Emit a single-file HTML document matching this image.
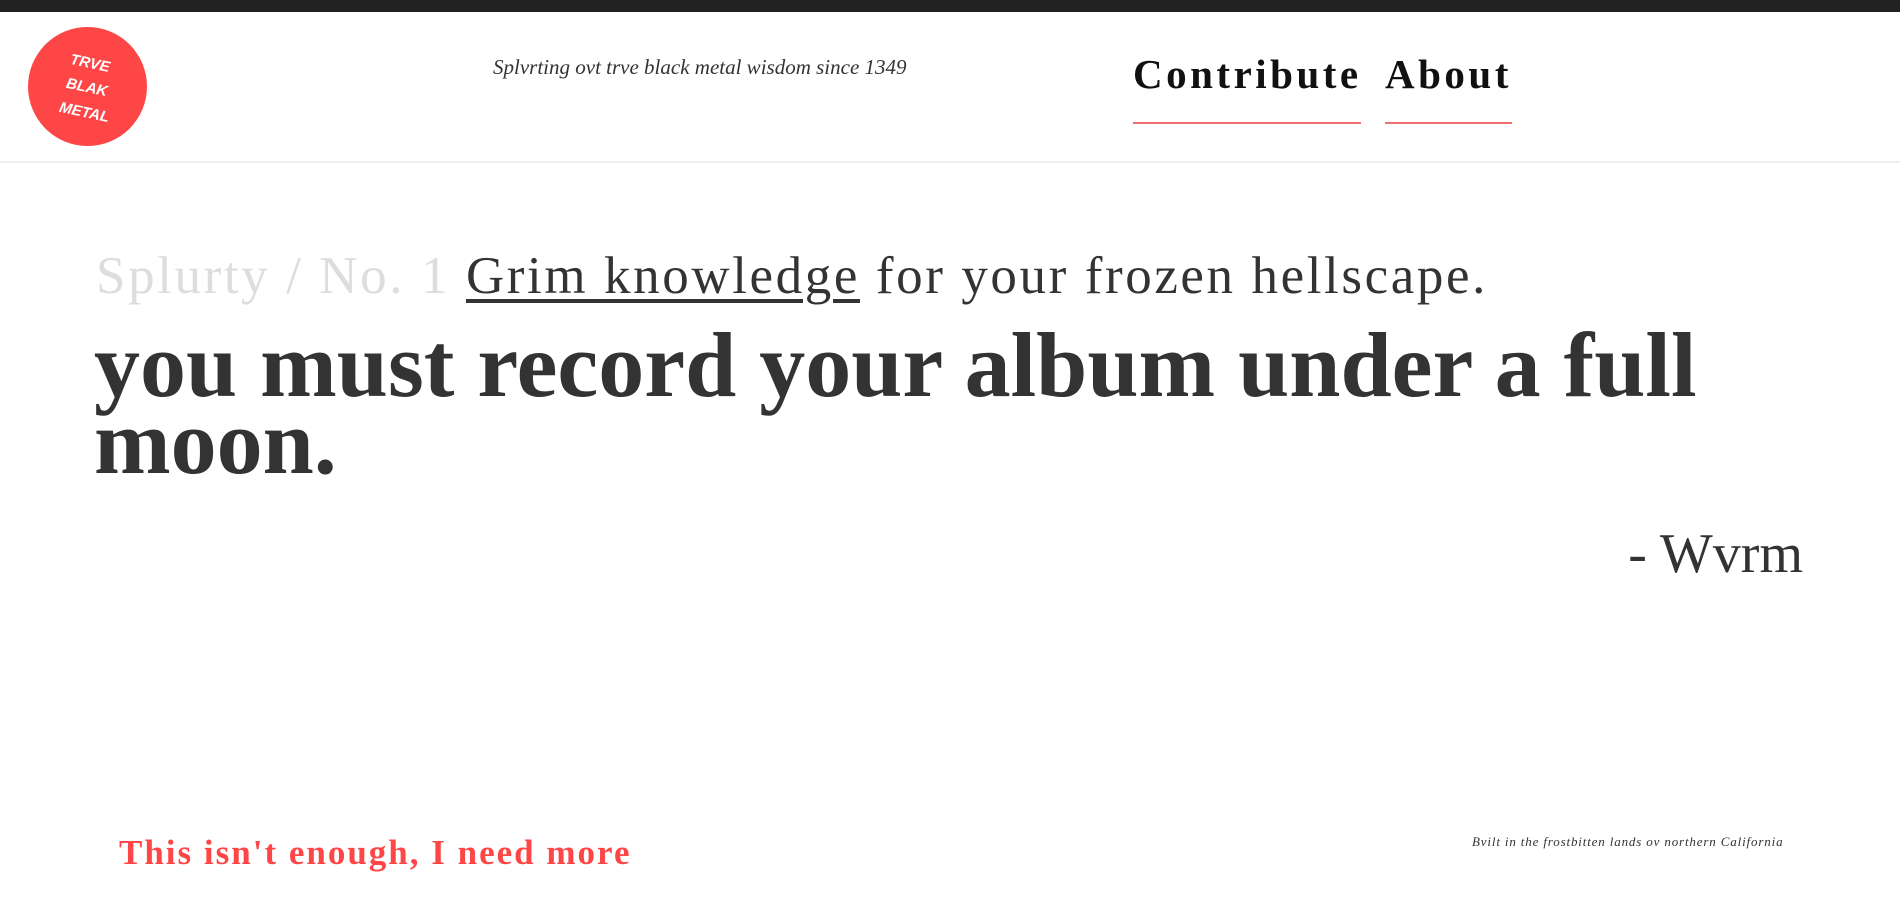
<!DOCTYPE html>
<html><head><meta charset="utf-8"><style>
*{margin:0;padding:0;box-sizing:border-box}
body{width:1900px;height:900px;background:#fff;font-family:"Liberation Serif",serif;color:#333;position:relative;overflow:hidden}
.bar{position:absolute;left:0;top:0;width:1900px;height:12px;background:#222}
.logo{position:absolute;left:28px;top:27px;width:119px;height:119px;border-radius:50%;background:#ff4646}
.logo span{position:absolute;font-family:"Liberation Sans",sans-serif;font-weight:bold;font-style:italic;color:#fff;font-size:15px;transform:rotate(12deg)}
.tag{position:absolute;left:493px;top:55px;font-style:italic;font-size:21px;color:#333;white-space:nowrap}
.nav{position:absolute;top:50px;font-weight:bold;font-size:41px;letter-spacing:3.5px;color:#111;white-space:nowrap}
.ul{position:absolute;top:122px;height:2px;background:#f07070}
.hr{position:absolute;left:0;top:161px;width:1900px;height:2px;background:#eee}
.sub{position:absolute;left:96px;top:246px;font-size:53px;letter-spacing:2.6px;white-space:nowrap;color:#333}
.sub .g{color:#ddd}
.sub u{text-decoration-thickness:4px;text-underline-offset:6px}
h1{position:absolute;left:94px;top:327px;width:1720px;font-size:92px;line-height:77px;font-weight:bold;color:#333}
.auth{position:absolute;right:97px;top:522px;font-size:56px;white-space:nowrap}
.more{position:absolute;left:119px;top:833px;font-size:35px;letter-spacing:2px;font-weight:bold;color:#ff4646;white-space:nowrap}
.built{position:absolute;left:1472px;top:834px;font-size:13px;letter-spacing:0.85px;font-style:italic;white-space:nowrap;color:#333}
</style></head><body>
<div class="bar"></div>
<div class="logo"><span style="left:42px;top:28px">TRVE</span><span style="left:38px;top:52px">BLAK</span><span style="left:31px;top:77px">METAL</span></div>
<div class="tag">Splvrting ovt trve black metal wisdom since 1349</div>
<div class="nav" style="left:1133px">Contribute</div>
<div class="ul" style="left:1133px;width:228px"></div>
<div class="nav" style="left:1385px">About</div>
<div class="ul" style="left:1385px;width:127px"></div>
<div class="hr"></div>
<div class="sub"><span class="g">Splurty / No. 1</span> <u>Grim knowledge</u> for your frozen hellscape.</div>
<h1>you must record your album under a full moon.</h1>
<div class="auth">- Wvrm</div>
<div class="more">This isn't enough, I need more</div>
<div class="built">Bvilt in the frostbitten lands ov northern California</div>
</body></html>
